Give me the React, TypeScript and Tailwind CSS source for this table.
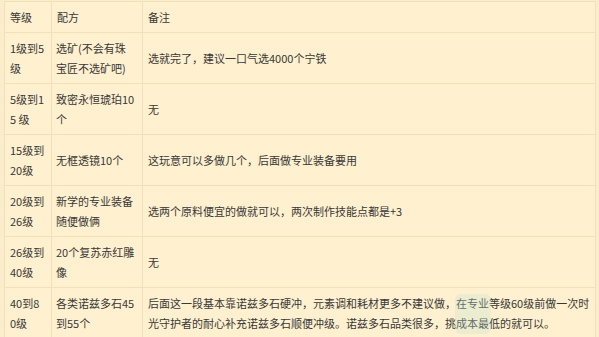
import React from "react";

const rows: [string[], string[], string][] = [
  [["1级到5", "级"], ["选矿(不会有珠", "宝匠不选矿吧)"], "选就完了，建议一口气选4000个宁铁"],
  [["5级到1", "5 级"], ["致密永恒琥珀10", "个"], "无"],
  [["15级到", "20级"], ["无框透镜10个"], "这玩意可以多做几个，后面做专业装备要用"],
  [["20级到", "26级"], ["新学的专业装备", "随便做俩"], "选两个原料便宜的做就可以，两次制作技能点都是+3"],
  [["26级到", "40级"], ["20个复苏赤红雕", "像"], "无"],
  [
    ["40到8", "0级"],
    ["各类诺兹多石45", "到55个"],
    "后面这一段基本靠诺兹多石硬冲，元素调和耗材更多不建议做，在专业等级60级前做一次时光守护者的耐心补充诺兹多石顺便冲级。诺兹多石品类很多，挑成本最低的就可以。",
  ],
];

function Lines({ lines }: { lines: string[] }) {
  return (
    <>
      {lines.map((l, i) => (
        <div key={i} className="whitespace-nowrap">
          {l}
        </div>
      ))}
    </>
  );
}

export default function App() {
  return (
    <div
      className="relative w-[599px] h-[337px] overflow-hidden bg-[#fbedcb] pl-[4px] pt-[1px] text-[#383838]"
      style={{ fontFamily: '"Noto Sans CJK SC", "Noto Sans", sans-serif' }}
    >
      <table className="w-[592px] border-collapse bg-[#fff0cf] text-[11px] leading-[20px] table-fixed">
        <colgroup>
          <col className="w-[47px]" />
          <col className="w-[91px]" />
          <col />
        </colgroup>
        <thead>
          <tr className="h-[31px]">
            <th className="border border-[#f2e0b6] px-[5px] py-[5px] text-left font-normal align-middle">等级</th>
            <th className="border border-[#f2e0b6] px-[5px] py-[5px] text-left font-normal align-middle">配方</th>
            <th className="border border-[#f2e0b6] px-[5px] py-[5px] text-left font-normal align-middle">备注</th>
          </tr>
        </thead>
        <tbody>
          {rows.map((r, i) => (
            <tr key={i} className="h-[51px]">
              <td className="border border-[#f2e0b6] px-[5px] py-[5px] align-middle">
                <Lines lines={r[0]} />
              </td>
              <td className="border border-[#f2e0b6] px-[4px] py-[5px] align-middle">
                <Lines lines={r[1]} />
              </td>
              <td className="border border-[#f2e0b6] px-[5px] py-[5px] align-middle">{r[2]}</td>
            </tr>
          ))}
        </tbody>
      </table>
      <div className="absolute left-[455px] top-[294px] w-[36px] h-[40px] rounded-[6px] bg-[#bfe3d6] opacity-30" />
    </div>
  );
}
